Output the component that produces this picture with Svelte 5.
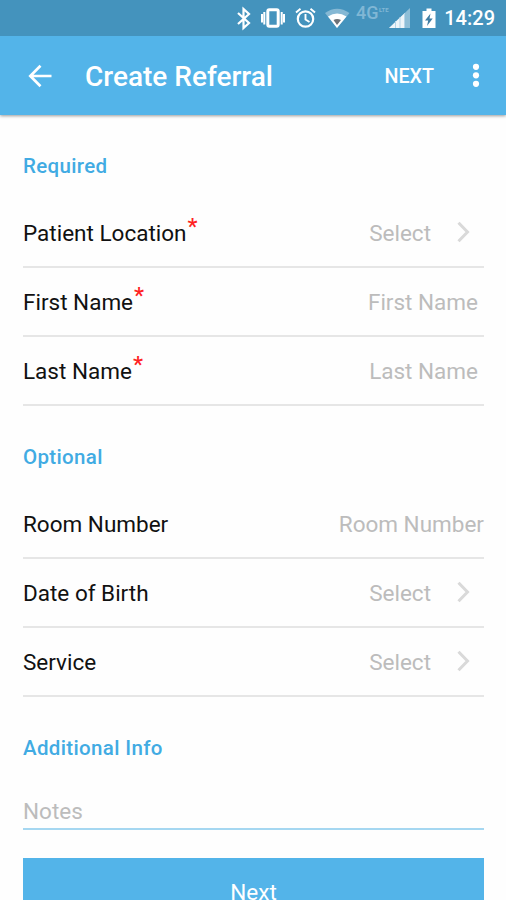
<script lang="ts">
    type Field = {
        label: string
        kind: 'select' | 'text'
        required?: boolean
        flush?: boolean
    }

    let sections: { title: string, fields: Field[] }[] = [
        {
            title: 'Required',
            fields: [
                {label: 'Patient Location', kind: 'select', required: true},
                {label: 'First Name', kind: 'text', required: true},
                {label: 'Last Name', kind: 'text', required: true},
            ],
        },
        {
            title: 'Optional',
            fields: [
                {label: 'Room Number', kind: 'text', flush: true},
                {label: 'Date of Birth', kind: 'select'},
                {label: 'Service', kind: 'select'},
            ],
        },
    ]
</script>


<div class="screen">
    <div class="status">
        <svg class="icons" width="214" height="36" viewBox="0 0 214 36">
            <!-- bluetooth -->
            <path d="M12 13l11 10-5.500 5V9l5.500 5L12 24" fill="none" stroke="#fff" stroke-width="2.200"/>
            <!-- vibrate -->
            <rect x="41.800" y="9.800" width="10.400" height="16.400" rx="1.500" fill="none" stroke="#fff" stroke-width="3"/>
            <path d="M38.300 12v12.500M36 14v8.500M55.700 12v12.500M58 14v8.500" stroke="#fff" stroke-width="2"/>
            <!-- alarm -->
            <circle cx="79.500" cy="19" r="7.700" fill="none" stroke="#fff" stroke-width="2.200"/>
            <path d="M79.500 14v5.500l4 2.500M70 12.500l4.500-3.800M89 12.500l-4.500-3.800" fill="none" stroke="#fff" stroke-width="1.900"/>
            <!-- wifi -->
            <path d="M99 13Q111 4.500 123.500 13L111 28z" fill="#fff" opacity=".35"/>
            <path d="M102 16.500Q111 10.500 120.500 16.500L111 28z" fill="#fff"/>
            <path d="M107.500 20Q111 18 115 20L111 25z" fill="#6d7176"/>
            <!-- signal -->
            <path d="M163 28L184 8v20z" fill="#fff" opacity=".4"/>
            <path d="M163 28L178 13.700V28z" fill="#fff" opacity=".85"/>
            <path d="M169.500 21v7M174 17v11M178.500 13v15" stroke="#b5d5e8" stroke-width="1"/>
            <!-- battery -->
            <path d="M196.500 11h4V8.500h5V11h4v17h-13z" fill="#fff"/>
            <path d="M204.500 13.500l-5.500 7h3.200l-1.200 5.500 5.700-7.500h-3.200z" fill="#3f7da3"/>
        </svg>
        <span class="network">4G</span>
        <span class="lte">LTE</span>
        <span class="clock">14:29</span>
    </div>

    <header>
        <button class="back" aria-label="Back">
            <svg width="24" height="24" viewBox="0 0 24 24">
                <path d="M23.500 12H2.500M12.500 1.800L2.300 12l10.200 10.200" fill="none" stroke="#fff" stroke-width="2.700"/>
            </svg>
        </button>
        <h1>Create Referral</h1>
        <button class="action">NEXT</button>
        <button class="more" aria-label="More options">
            <svg width="8" height="26" viewBox="0 0 8 26">
                <circle cx="4" cy="3.800" r="3.100" fill="#fff"/>
                <circle cx="4" cy="12.300" r="3.100" fill="#fff"/>
                <circle cx="4" cy="20.800" r="3.100" fill="#fff"/>
            </svg>
        </button>
    </header>

    <main>
        {#each sections as section}
            <h2>{section.title}</h2>
            {#each section.fields as field}
                <div class="row">
                    <span class="label">{field.label}{#if field.required}<span class="star">*</span>{/if}</span>
                    {#if field.kind === 'select'}
                        <span class="value">Select</span>
                        <svg class="chevron" width="14" height="22" viewBox="0 0 14 22">
                            <path d="M1.500 1.800L10.500 11l-9 9.200" fill="none" stroke="#d9d9d9" stroke-width="3"/>
                        </svg>
                    {:else}
                        <span class="value" class:inset={!field.flush}>{field.label}</span>
                    {/if}
                </div>
            {/each}
        {/each}

        <h2>Additional Info</h2>
        <div class="notes">Notes</div>
        <button class="submit">Next</button>
    </main>
</div>


<style>

    :global(body) {
        background: #fefefe;
        overflow: hidden;
    }

    .screen {
        height: 900px;
        overflow: hidden;
        font-family: Roboto, "Liberation Sans", sans-serif;
        color: #111;
    }

    button {
        padding: 0;
        border: none;
        background: none;
        font-family: inherit;
        color: #fff;
    }

    .status {
        position: relative;
        display: flex;
        justify-content: flex-end;
        align-items: center;
        height: 36px;
        padding-right: 11px;
        box-sizing: border-box;
        background: #4493bd;
        color: #fff;
    }

    .icons {
        position: absolute;
        left: 226px;
        top: 0;
    }

    .network {
        position: absolute;
        left: 356px;
        top: 2px;
        font-size: 18px;
        line-height: 22px;
        font-weight: 500;
        color: #80b7d5;
    }

    .lte {
        position: absolute;
        left: 379px;
        top: 6px;
        font-size: 6px;
        line-height: 7px;
        font-weight: 700;
        color: #80b7d5;
    }

    .clock {
        font-size: 20px;
        font-weight: 500;
        line-height: 38px;
    }

    header {
        display: flex;
        align-items: center;
        height: 79px;
        padding: 0 26px 0 28px;
        background: #53b4e9;
        box-shadow: 0 1px 3px rgba(0, 0, 0, 0.4);
    }

    header svg {
        display: block;
    }

    h1 {
        flex: 1;
        margin: 2px 0 0 33px;
        font-size: 28px;
        font-weight: 500;
        color: #fff;
    }

    .action {
        margin: 2px 38px 0 0;
        font-size: 19.700px;
        font-weight: 500;
    }

    main {
        padding: 0 22px 0 23px;
    }

    h2 {
        height: 84px;
        margin: 0;
        padding-top: 39px;
        box-sizing: border-box;
        font-size: 20.500px;
        font-weight: 500;
        letter-spacing: 0.350px;
        line-height: 24px;
        color: #41abe3;
    }

    .row {
        display: flex;
        align-items: center;
        height: 69px;
        box-sizing: border-box;
        border-bottom: 2px solid #e6e6e6;
        font-size: 22.500px;
    }

    .label {
        flex: 1;
        padding-top: 1px;
    }

    .star {
        position: relative;
        top: -7px;
        left: 1px;
        font-weight: 500;
        color: #f22;
    }

    .value {
        padding-top: 1px;
        color: #bcbcbc;
    }

    .inset {
        margin-right: 6px;
    }

    .chevron {
        margin: 0 13px 1px 26px;
    }

    .notes {
        height: 49px;
        box-sizing: border-box;
        padding-top: 17px;
        border-bottom: 2px solid #a5d7f1;
        font-size: 22.500px;
        line-height: 26px;
        color: #bcbcbc;
    }

    .submit {
        display: block;
        width: 100%;
        height: 67px;
        margin-top: 28px;
        background: #53b4e9;
        font-size: 22.500px;
    }

</style>
